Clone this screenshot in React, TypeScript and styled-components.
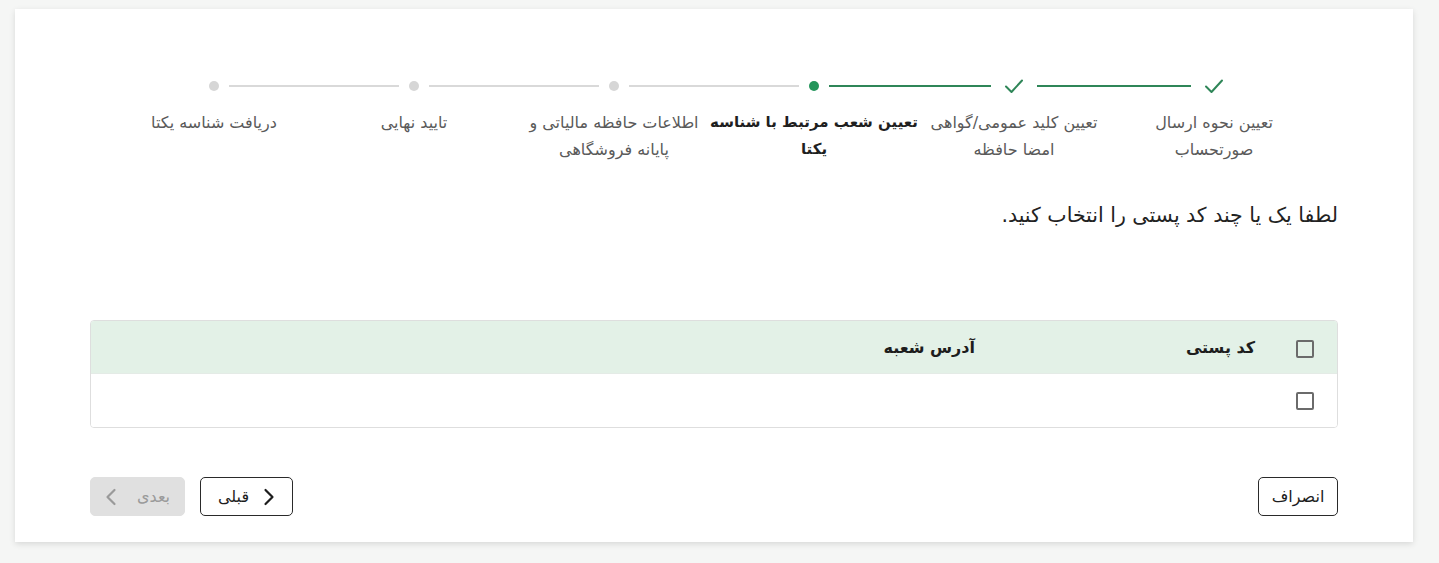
import React from 'react';
import styled, { createGlobalStyle } from 'styled-components';

const GlobalStyle = createGlobalStyle`
  html, body {
    margin: 0;
    padding: 0;
    background: #f5f6f5;
    font-family: "DejaVu Sans", sans-serif;
  }
`;

const StyledPage = styled.div`
  padding: 9px 26px 21px 15px;
`;

const StyledCard = styled.div`
  direction: rtl;
  background: #ffffff;
  box-shadow: 0 2px 6px rgba(0, 0, 0, 0.12);
  padding: 62px 75px 26px;
  box-sizing: border-box;
  height: 533px;
  display: flex;
  flex-direction: column;
`;

const StyledStepper = styled.div`
  display: grid;
  grid-template-columns: repeat(6, 200px);
  justify-content: center;
`;

const StyledStep = styled.div`
  display: flex;
  flex-direction: column;
  align-items: center;
`;

const StyledStepHead = styled.div`
  display: flex;
  align-items: center;
  width: 100%;
  height: 30px;
`;

const StyledConnector = styled.div<{ $state: 'done' | 'pending' | 'none' }>`
  flex: 1;
  height: 2px;
  background: ${({ $state }) =>
    $state === 'done' ? '#2f8658' : $state === 'pending' ? '#d9d9d9' : 'transparent'};
`;

const StyledIconBox = styled.div<{ $wide: boolean }>`
  width: ${({ $wide }) => ($wide ? '46px' : '30px')};
  display: flex;
  align-items: center;
  justify-content: center;
`;

const StyledDot = styled.span<{ $active: boolean }>`
  width: 10px;
  height: 10px;
  border-radius: 50%;
  background: ${({ $active }) => ($active ? '#23955a' : '#d6d6d6')};
`;

const StyledStepLabel = styled.div<{ $active: boolean }>`
  margin-top: 8px;
  text-align: center;
  white-space: nowrap;
  font-size: ${({ $active }) => ($active ? '15px' : '16px')};
  line-height: 27px;
  color: ${({ $active }) => ($active ? '#1f1f1f' : '#5a5a5a')};
  font-weight: ${({ $active }) => ($active ? 700 : 400)};
`;

const StyledLabelLine = styled.div``;

const StyledTitle = styled.div`
  margin-top: 38px;
  font-size: 20.5px;
  line-height: 28px;
  color: #222;
`;

const StyledTable = styled.div`
  margin-top: 91px;
  border: 1px solid #dedede;
  border-radius: 4px;
  overflow: hidden;
`;

const StyledRow = styled.div<{ $head?: boolean }>`
  display: grid;
  grid-template-columns: 58px 280px 1fr;
  align-items: center;
  height: ${({ $head }) => ($head ? '52px' : '53px')};
  background: ${({ $head }) => ($head ? '#e3f1e7' : '#ffffff')};
  border-bottom: ${({ $head }) => ($head ? '1px solid #e4ebe6' : 'none')};
`;

const StyledCell = styled.div`
  padding-right: 24px;
  font-size: 16px;
  font-weight: 700;
  color: #1d1d1d;
`;

const StyledCheckbox = styled.span<{ $head?: boolean }>`
  display: block;
  margin-right: 23px;
  margin-top: ${({ $head }) => ($head ? '4px' : '0')};
  width: 14px;
  height: 14px;
  border: 2px solid #6b6b6b;
  border-radius: 2px;
`;

const StyledFooter = styled.div`
  margin-top: auto;
  display: flex;
  justify-content: space-between;
  align-items: center;
`;

const StyledGroup = styled.div`
  display: flex;
  gap: 15px;
`;

const StyledButton = styled.button<{ $disabled?: boolean; $width: number; $gap: number }>`
  direction: rtl;
  height: 39px;
  width: ${({ $width }) => $width}px;
  box-sizing: border-box;
  display: flex;
  align-items: center;
  justify-content: center;
  gap: ${({ $gap }) => $gap}px;
  font-family: "DejaVu Sans", sans-serif;
  font-size: 16px;
  border-radius: 5px;
  border: 1px solid ${({ $disabled }) => ($disabled ? '#e0e0e0' : '#2a2a2a')};
  background: ${({ $disabled }) => ($disabled ? '#e0e0e0' : '#ffffff')};
  color: ${({ $disabled }) => ($disabled ? '#9a9a9a' : '#1d1d1d')};
  cursor: ${({ $disabled }) => ($disabled ? 'default' : 'pointer')};
  padding: 0;
`;

const Check = () => (
  <svg width="20" height="16" viewBox="0 0 20 16" fill="none">
    <path d="M2 8.5 L7.5 14 L18 2.5" stroke="#2f8658" strokeWidth="2" strokeLinecap="round" strokeLinejoin="round" />
  </svg>
);

const Chevron = ({ dir, color }: { dir: 'left' | 'right'; color: string }) => (
  <svg width="12" height="18" viewBox="0 0 12 18" fill="none">
    <path
      d={dir === 'right' ? 'M2.5 2 L9.5 9 L2.5 16' : 'M9.5 2 L2.5 9 L9.5 16'}
      stroke={color}
      strokeWidth="2.2"
      strokeLinecap="round"
      strokeLinejoin="round"
    />
  </svg>
);

type Status = 'done' | 'active' | 'pending';

const steps: { lines: string[]; status: Status }[] = [
  { lines: ['تعیین نحوه ارسال', 'صورتحساب'], status: 'done' },
  { lines: ['تعیین کلید عمومی/گواهی', 'امضا حافظه'], status: 'done' },
  { lines: ['تعیین شعب مرتبط با شناسه', 'یکتا'], status: 'active' },
  { lines: ['اطلاعات حافظه مالیاتی و', 'پایانه فروشگاهی'], status: 'pending' },
  { lines: ['تایید نهایی'], status: 'pending' },
  { lines: ['دریافت شناسه یکتا'], status: 'pending' },
];

export default () => {
  return (
    <>
      <GlobalStyle />
      <StyledPage>
        <StyledCard>
          <StyledStepper>
            {steps.map((step, i) => {
              const next = steps[i + 1];
              const before = i === 0 ? 'none' : step.status === 'pending' ? 'pending' : 'done';
              const after = !next ? 'none' : next.status === 'pending' ? 'pending' : 'done';
              return (
                <StyledStep key={step.lines[0]}>
                  <StyledStepHead>
                    <StyledConnector $state={before} />
                    <StyledIconBox $wide={step.status === 'done'}>
                      {step.status === 'done' ? <Check /> : <StyledDot $active={step.status === 'active'} />}
                    </StyledIconBox>
                    <StyledConnector $state={after} />
                  </StyledStepHead>
                  <StyledStepLabel $active={step.status === 'active'}>
                    {step.lines.map((line) => (
                      <StyledLabelLine key={line}>{line}</StyledLabelLine>
                    ))}
                  </StyledStepLabel>
                </StyledStep>
              );
            })}
          </StyledStepper>

          <StyledTitle>لطفا یک یا چند کد پستی را انتخاب کنید.</StyledTitle>

          <StyledTable>
            <StyledRow $head>
              <StyledCheckbox $head />
              <StyledCell>کد پستی</StyledCell>
              <StyledCell>آدرس شعبه</StyledCell>
            </StyledRow>
            <StyledRow>
              <StyledCheckbox />
            </StyledRow>
          </StyledTable>

          <StyledFooter>
            <StyledButton $width={80} $gap={0}>انصراف</StyledButton>
            <StyledGroup>
              <StyledButton $width={93} $gap={14}>
                <Chevron dir="right" color="#1d1d1d" />
                قبلی
              </StyledButton>
              <StyledButton $width={95} $gap={20} $disabled disabled>
                بعدی
                <Chevron dir="left" color="#9a9a9a" />
              </StyledButton>
            </StyledGroup>
          </StyledFooter>
        </StyledCard>
      </StyledPage>
    </>
  );
};
